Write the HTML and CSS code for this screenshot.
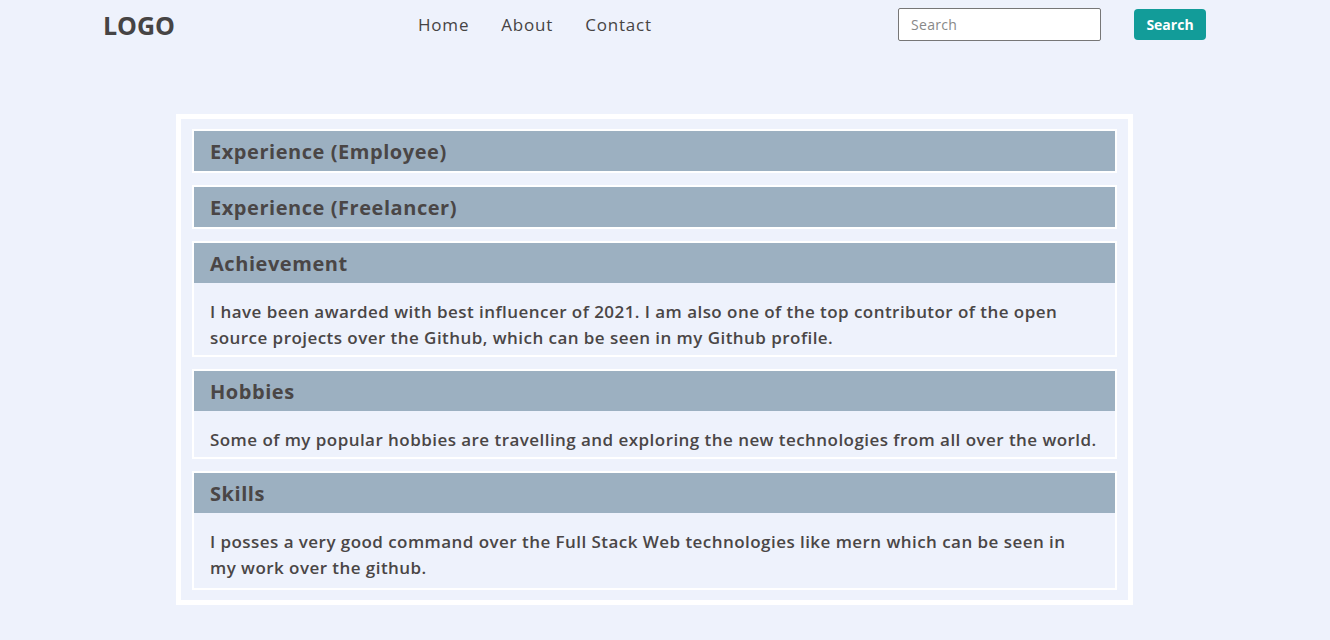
FILE: index.html
```html
<!DOCTYPE html>
<html lang="en">
<head>
<meta charset="utf-8">
<title>Profile</title>
<link rel="stylesheet" href="styles.css">
</head>
<body>
<header class="topbar">
  <div class="logo">LOGO</div>
  <nav class="menu">
    <a href="#">Home</a>
    <a href="#">About</a>
    <a href="#">Contact</a>
  </nav>
  <form class="search">
    <input type="text" placeholder="Search">
    <button type="button">Search</button>
  </form>
</header>
<main class="panel">
  <section class="item">
    <h2 class="item-title">Experience (Employee)</h2>
  </section>
  <section class="item">
    <h2 class="item-title">Experience (Freelancer)</h2>
  </section>
  <section class="item">
    <h2 class="item-title">Achievement</h2>
    <p class="item-body">I have been awarded with best influencer of 2021. I am also one of the top contributor of the open source projects over the Github, which can be seen in my Github profile.</p>
  </section>
  <section class="item">
    <h2 class="item-title">Hobbies</h2>
    <p class="item-body">Some of my popular hobbies are travelling and exploring the new technologies from all over the world.</p>
  </section>
  <section class="item">
    <h2 class="item-title">Skills</h2>
    <p class="item-body item-body-last">I posses a very good command over the Full Stack Web technologies like mern which can be seen in<br>my work over the github.</p>
  </section>
</main>
</body>
</html>
```

FILE: styles.css
```css
* { box-sizing: border-box; }

body {
  margin: 0;
  background: #eef2fc;
  font-family: "Open Sans", "Noto Sans", sans-serif;
  color: #4a4646;
}

.topbar {
  display: flex;
  align-items: center;
  height: 49px;
  padding: 0 124px 0 103px;
}

.logo {
  width: 315px;
  font-size: 25px;
  font-weight: 700;
  color: #464444;
}

.menu {
  display: flex;
  gap: 32px;
}

.menu a {
  font-size: 17px;
  letter-spacing: 0.8px;
  color: #464444;
  text-decoration: none;
}

.search {
  margin-left: auto;
  display: flex;
  align-items: center;
  gap: 33px;
}

.search input {
  width: 203px;
  height: 33px;
  border: 1px solid #777;
  border-radius: 2px;
  padding: 0 12px;
  font-family: inherit;
  font-size: 14px;
  letter-spacing: 0.3px;
  background: #fff;
}

.search input::placeholder { color: #888; }

.search button {
  height: 31px;
  width: 72px;
  border: 0;
  border-radius: 4px;
  background: #129c99;
  color: #fff;
  font-family: inherit;
  font-size: 14px;
  font-weight: 700;
}

.panel {
  width: 957px;
  margin: 65px 0 0 176px;
  border: 5px solid #fff;
  padding: 10px 11px 10px;
  display: flex;
  flex-direction: column;
  gap: 12px;
}

.item {
  border: 2px solid #fff;
}

.item-title {
  margin: 0;
  height: 40px;
  display: flex;
  align-items: center;
  padding: 0 16px;
  background: #9cb0c1;
  font-size: 20px;
  font-weight: 700;
  letter-spacing: 0.55px;
  color: #4a4646;
}

.item-body {
  margin: 0;
  padding: 16px 16px 4px;
  font-size: 17px;
  font-weight: 600;
  letter-spacing: 0.45px;
  line-height: 26px;
}

.item-body-last {
  padding-bottom: 7px;
}
```
